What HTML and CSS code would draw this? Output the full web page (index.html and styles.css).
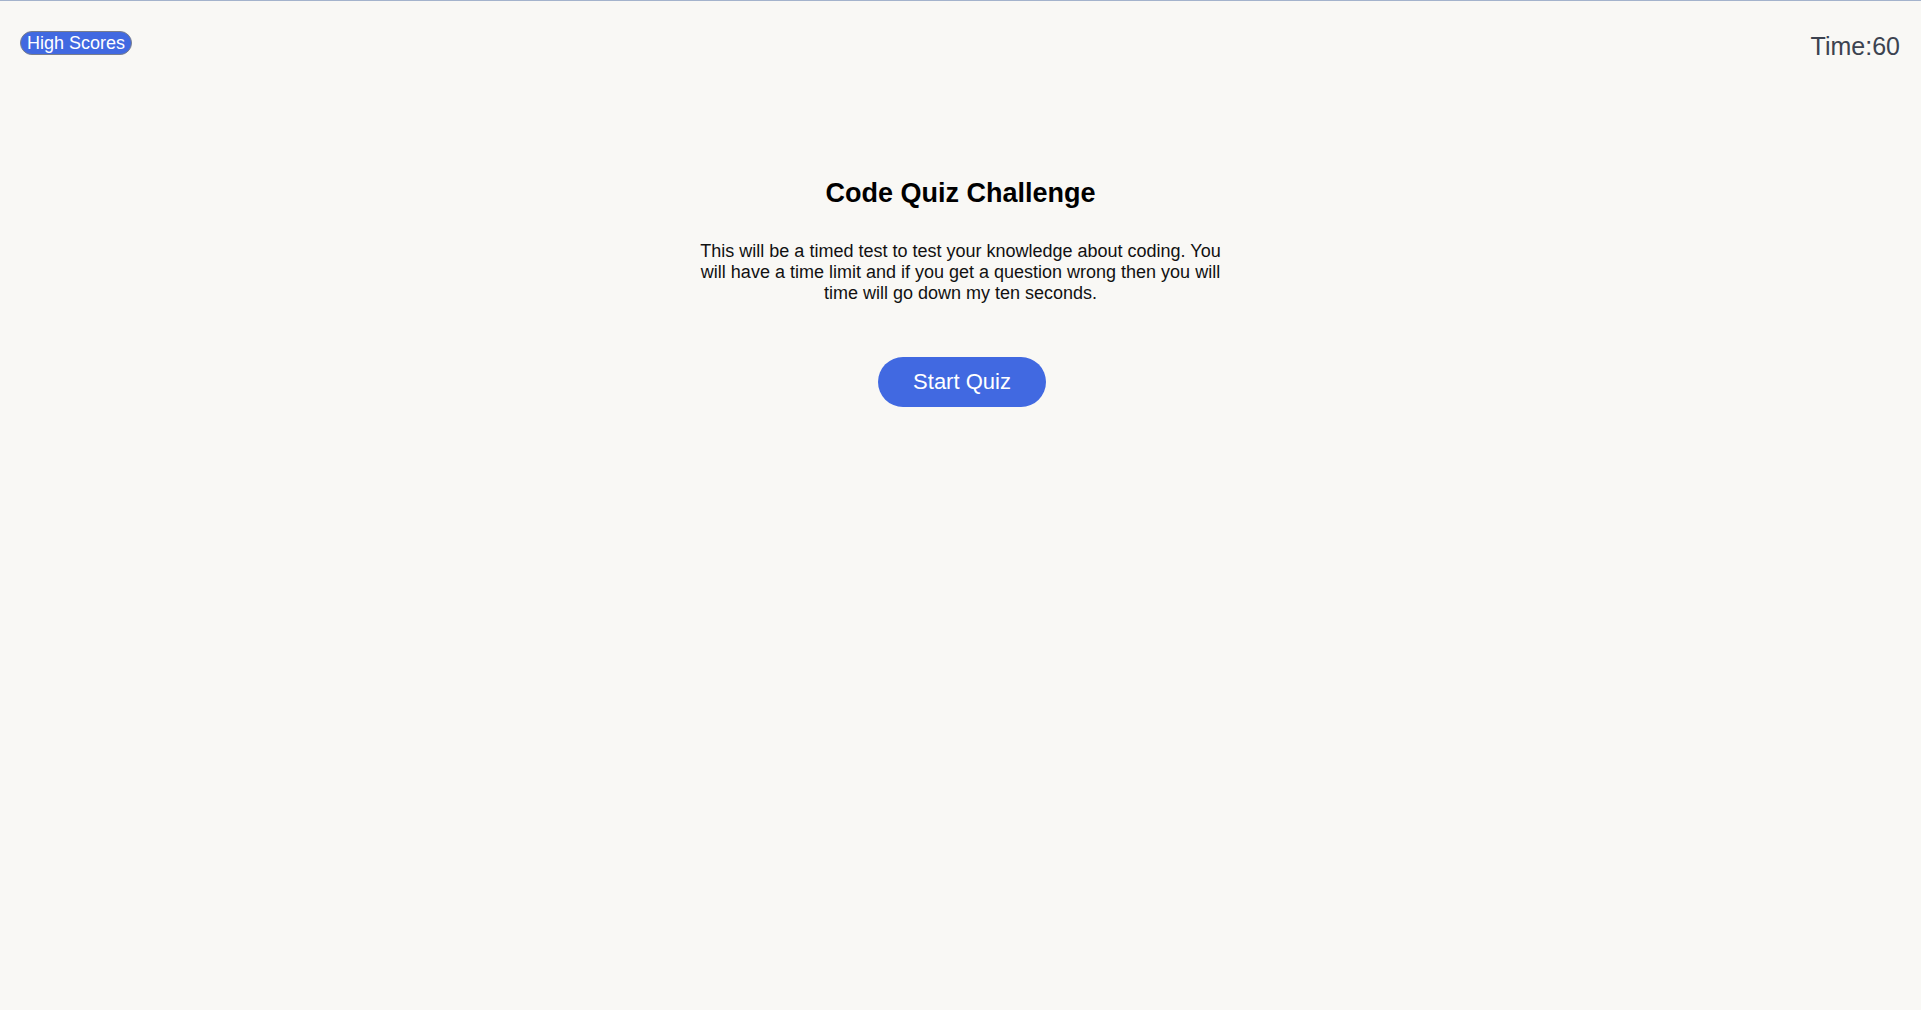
FILE: index.html
```html
<!DOCTYPE html>
<html lang="en">
<head>
<meta charset="utf-8">
<title>Code Quiz Challenge</title>
<link rel="stylesheet" href="styles.css">
</head>
<body>
  <header class="top-bar">
    <button class="high-scores">High Scores</button>
    <div class="timer">Time:60</div>
  </header>
  <main class="intro">
    <h1 class="intro-title">Code Quiz Challenge</h1>
    <p class="intro-text">This will be a timed test to test your knowledge about coding. You will have a time limit and if you get a question wrong then you will time will go down my ten seconds.</p>
    <button class="start-btn">Start Quiz</button>
  </main>
</body>
</html>
```
FILE: styles.css
```css
html {
  height: 100%;
  box-sizing: border-box;
  border-top: 1px solid #a4b3cc;
  background: #f9f8f5;
}

body {
  margin: 0;
  font-family: "Liberation Sans", Arial, sans-serif;
  background: #f9f8f5;
  color: #111;
}

.top-bar {
  display: flex;
  justify-content: space-between;
  align-items: flex-start;
  padding: 29px 21px 0 20px;
}

.high-scores {
  font-family: "Liberation Sans", Arial, sans-serif;
  font-size: 18px;
  line-height: 22px;
  padding: 0 6px;
  color: #fff;
  background: #4169e1;
  border: 1px solid #7a7f8c;
  border-radius: 12px;
  cursor: pointer;
  margin-top: 1px;
}

.timer {
  font-size: 25px;
  color: #3c4350;
  line-height: 28px;
  margin-top: 2px;
}

.intro {
  display: flex;
  flex-direction: column;
  align-items: center;
  margin-top: 118px;
}

.intro-title {
  margin: 0;
  font-size: 27px;
  line-height: 31px;
  font-weight: bold;
  color: #000;
}

.intro-text {
  margin: 32px 0 0;
  width: 535px;
  font-size: 18px;
  line-height: 21px;
  text-align: center;
  color: #111;
}

.start-btn {
  margin: 53px 0 0 3px;
  height: 50px;
  padding: 0 35px;
  font-family: "Liberation Sans", Arial, sans-serif;
  font-size: 22px;
  color: #fff;
  background: #4169e1;
  border: none;
  border-radius: 25px;
  cursor: pointer;
}
```
